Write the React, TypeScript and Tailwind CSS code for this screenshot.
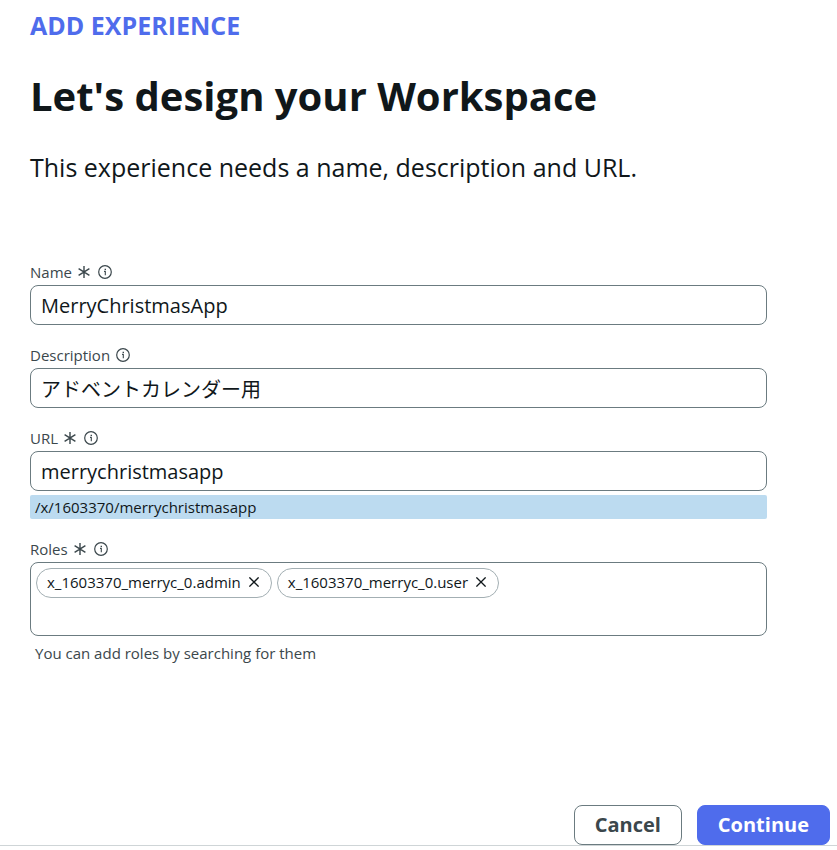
import React, { useState } from "react";

interface FieldLabelProps {
  htmlFor: string;
  text: string;
  required?: boolean;
}

const RequiredIcon = () => (
  <svg
    className="mr-0.5 h-3 w-3"
    viewBox="0 0 12 12"
    fill="none"
    stroke="currentColor"
    strokeWidth="1.4"
    aria-hidden="true"
  >
    <path d="M6 0v12M0.6 2.6l10.8 6.8M11.4 2.6L0.6 9.4" />
  </svg>
);

const InfoIcon = () => (
  <svg
    className="h-3.5 w-3.5"
    viewBox="0 0 14 14"
    fill="none"
    stroke="currentColor"
    aria-hidden="true"
  >
    <circle cx="7" cy="7" r="6.3" strokeWidth="1.2" />
    <path d="M6 6.4h1.3V10.2" strokeWidth="1.1" />
    <path d="M6.6 4.3h1.4" strokeWidth="1.3" />
  </svg>
);

const CloseIcon = () => (
  <svg
    className="h-2.5 w-2.5"
    viewBox="0 0 10 10"
    fill="none"
    stroke="currentColor"
    strokeWidth="1.3"
    aria-hidden="true"
  >
    <path d="M0.4 0.4l9.2 9.2M9.6 0.4L0.4 9.6" />
  </svg>
);

const FieldLabel: React.FC<FieldLabelProps> = ({ htmlFor, text, required }) => {
  return (
    <div className="mb-[3px] flex h-5 items-center gap-1.5 text-[15px] leading-5 text-[#3b474c]">
      <label htmlFor={htmlFor}>{text}</label>
      {required && <RequiredIcon />}
      <button type="button" aria-label={`About ${text}`}>
        <InfoIcon />
      </button>
    </div>
  );
};

const inputClass =
  "block h-10 w-full rounded-lg border border-[#6b7b80] bg-white px-2.5 text-xl text-[#10171a] outline-none";

const App: React.FC = () => {
  const [name, setName] = useState("MerryChristmasApp");
  const [description, setDescription] = useState("アドベントカレンダー用");
  const [url, setUrl] = useState("merrychristmasapp");
  const [roles, setRoles] = useState([
    "x_1603370_merryc_0.admin",
    "x_1603370_merryc_0.user",
  ]);

  return (
    <div className="bg-white font-['Open_Sans','Noto_Sans_CJK_JP',sans-serif] text-[#10171a]">
      <form onSubmit={(e) => e.preventDefault()}>
        <div className="pt-[9px] pr-[70px] pl-[30px]">
          <p className="text-[25px] leading-8 font-bold text-[#4f6cec]">
            ADD EXPERIENCE
          </p>
          <h1 className="mt-7 text-[40px] leading-[54px] font-bold">
            Let's design your Workspace
          </h1>
          <p className="mt-[26px] text-[25px] leading-9">
            This experience needs a name, description and URL.
          </p>

          <div className="mt-[77px]">
            <FieldLabel htmlFor="name" text="Name" required />
            <input
              id="name"
              value={name}
              onChange={(e) => setName(e.target.value)}
              className={inputClass}
            />
          </div>

          <div className="mt-5">
            <FieldLabel htmlFor="description" text="Description" />
            <input
              id="description"
              value={description}
              onChange={(e) => setDescription(e.target.value)}
              className={inputClass}
            />
          </div>

          <div className="mt-5">
            <FieldLabel htmlFor="url" text="URL" required />
            <input
              id="url"
              value={url}
              onChange={(e) => setUrl(e.target.value)}
              className={inputClass}
            />
            <p className="mt-1 h-6 rounded-xs bg-[#bcdbf0] px-[5px] text-[15px] leading-6">
              /x/1603370/{url}
            </p>
          </div>

          <div className="mt-5">
            <FieldLabel htmlFor="roles" text="Roles" required />
            <div className="flex min-h-[74px] flex-wrap content-start gap-[5px] rounded-lg border border-[#6b7b80] p-[5px]">
              {roles.map((role) => (
                <span
                  key={role}
                  className="flex h-[30px] items-center gap-2 rounded-full border border-[#a3afb3] pr-3 pb-0.5 pl-2.5 text-[15px]"
                >
                  {role}
                  <button
                    type="button"
                    aria-label={`Remove ${role}`}
                    onClick={() => setRoles(roles.filter((r) => r !== role))}
                  >
                    <CloseIcon />
                  </button>
                </span>
              ))}
              <input id="roles" className="h-[30px] min-w-10 flex-1 outline-none" />
            </div>
            <p className="mt-[7px] px-[5px] text-[15px] leading-5 text-[#3b474c]">
              You can add roles by searching for them
            </p>
          </div>
        </div>

        <div className="mt-[142px] flex justify-end gap-[15px] border-b border-[#cfd5d7] pr-[7px]">
          <button
            type="button"
            className="h-10 rounded-lg border border-[#6b7b80] px-5 text-xl font-bold text-[#3b474c]"
          >
            Cancel
          </button>
          <button
            type="submit"
            className="h-10 rounded-lg border border-[#4f6cec] bg-[#4f6cec] px-5 text-xl font-bold text-white"
          >
            Continue
          </button>
        </div>
      </form>
    </div>
  );
};

export default App;
